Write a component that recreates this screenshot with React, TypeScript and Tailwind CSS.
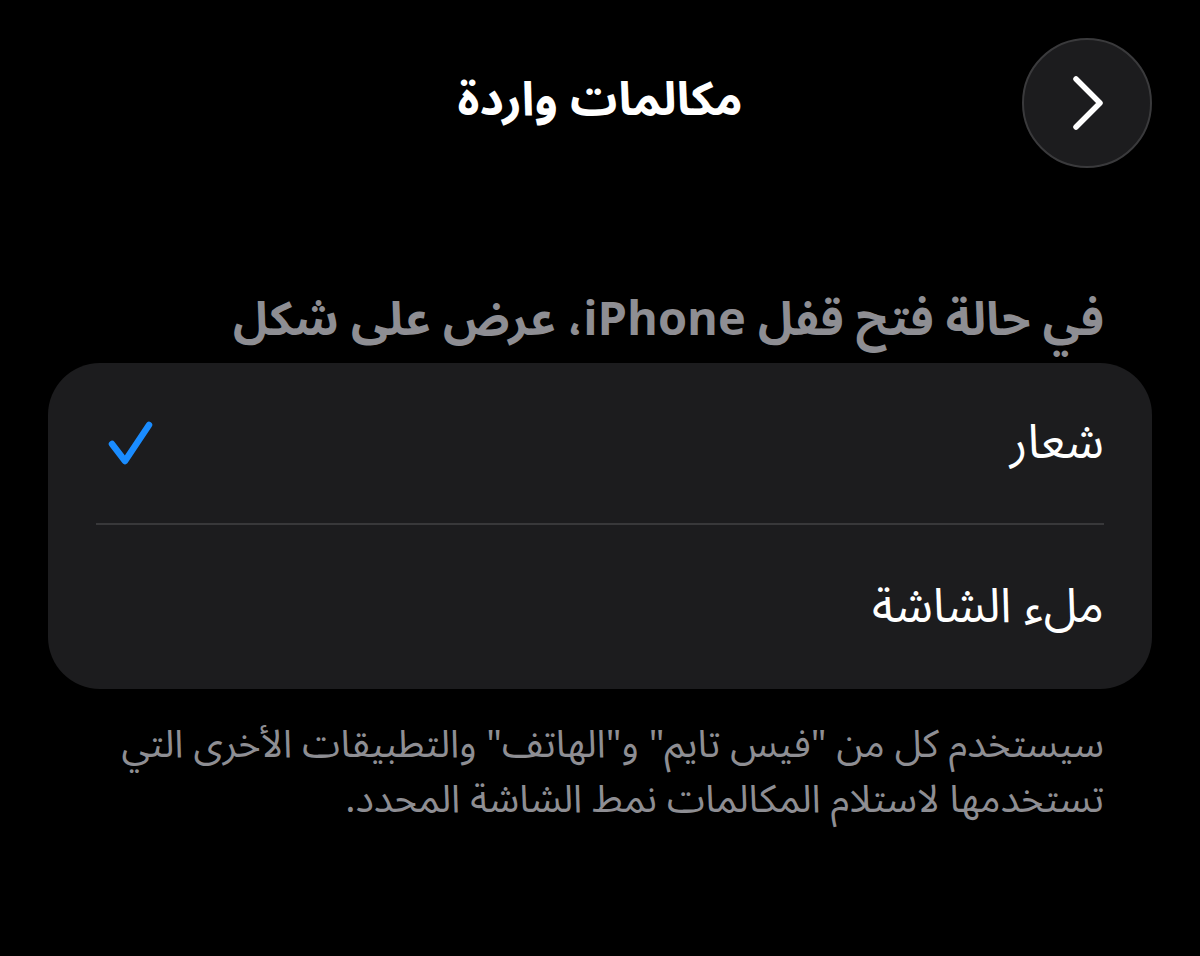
const arabic = { fontFamily: '"Noto Sans Arabic", "DejaVu Sans", "Noto Sans", sans-serif' }

function Chevron() {
  return (
    <svg width="34" height="60" viewBox="0 0 34 60" fill="none">
      <path d="M6 6 L30 30 L6 54" stroke="white" strokeWidth="5.5" strokeLinecap="round" strokeLinejoin="round" />
    </svg>
  )
}

function Check() {
  return (
    <svg width="58" height="50" viewBox="0 0 58 50" fill="none">
      <path d="M16 26 L29 43 L53 7" stroke="#1a8cff" strokeWidth="6.5" strokeLinecap="round" strokeLinejoin="round" />
    </svg>
  )
}

export default function App() {
  const options = [
    { label: 'شعار', checked: true },
    { label: 'ملء الشاشة', checked: false },
  ]

  return (
    <div dir="rtl" className="h-[956px] w-[1200px] overflow-hidden bg-black text-white" style={arabic}>
      {/* الرأس */}
      <div className="relative flex h-[205px] items-start justify-center pt-[38px]">
        <button
          type="button"
          className="absolute right-[48px] top-[38px] grid h-[130px] w-[130px] place-items-center rounded-full border-2 border-[#3a3a3c] bg-[#1c1c1e]"
        >
          <Chevron />
        </button>
        <h1 className="mt-[30px] text-[47px] font-bold leading-[64px]">مكالمات واردة</h1>
      </div>

      {/* عنوان القسم */}
      <p className="px-[96px] pb-[13px] pt-[85px] text-[47px] font-bold leading-[60px] text-[#8e8e93]">
        في حالة فتح قفل iPhone، عرض على شكل
      </p>

      {/* البطاقة */}
      <div className="mx-[48px] rounded-[52px] bg-[#1c1c1e] px-[48px]">
        {options.map((o, i) => (
          <div
            key={o.label}
            className={`flex items-center justify-between ${i === 0 ? 'h-[162px] border-b-2 border-[#38383a]' : 'h-[164px]'}`}
          >
            <span className="text-[48px] leading-none">{o.label}</span>
            {o.checked && <Check />}
          </div>
        ))}
      </div>

      {/* الوصف */}
      <p className="px-[96px] pt-[28px] text-[38.5px] leading-[55px] text-[#8e8e93]">
        سيستخدم كل من "فيس تايم" و"الهاتف" والتطبيقات الأخرى التي تستخدمها لاستلام المكالمات نمط الشاشة المحدد.
      </p>
    </div>
  )
}
